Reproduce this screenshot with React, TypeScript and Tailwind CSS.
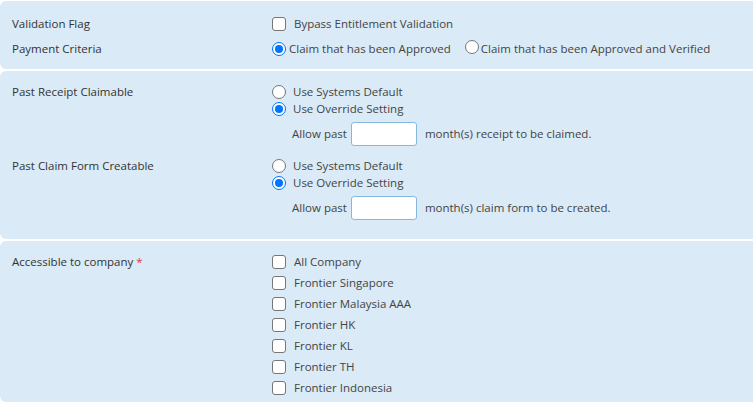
import React from 'react';

const Checkbox = () => (
  <span className="inline-block w-[14px] h-[14px] shrink-0 rounded-[3px] border border-[#767676] bg-white" />
);

const Radio = ({ checked }: { checked?: boolean }) =>
  checked ? (
    <span className="flex w-[14px] h-[14px] shrink-0 items-center justify-center rounded-full border border-[#0075ff] bg-white">
      <span className="w-[8px] h-[8px] rounded-full bg-[#0075ff]" />
    </span>
  ) : (
    <span className="inline-block w-[14px] h-[14px] shrink-0 rounded-full border border-[#767676] bg-white" />
  );

const OverrideBlock = ({ label, suffix }: { label: string; suffix: string }) => (
  <div className="grid grid-cols-[260px_1fr]">
    <div className="h-[17px] leading-[17px] text-[#333]">{label}</div>
    <div className="flex flex-col">
      <div className="flex h-[17px] items-center gap-[7px]">
        <Radio />
        <span>Use Systems Default</span>
      </div>
      <div className="flex h-[17px] items-center gap-[7px]">
        <Radio checked />
        <span>Use Override Setting</span>
      </div>
      <div className="mt-[5px] flex h-[24px] items-center pl-[20px]">
        <span>Allow past</span>
        <input
          type="text"
          className="ml-[4px] h-[24px] w-[66px] rounded-[3px] border border-[#86b7dc] bg-white outline-none"
        />
        <span className="ml-[8px]">{suffix}</span>
      </div>
    </div>
  </div>
);

const companies = [
  'All Company',
  'Frontier Singapore',
  'Frontier Malaysia AAA',
  'Frontier HK',
  'Frontier KL',
  'Frontier TH',
  'Frontier Indonesia',
];

export default function App() {
  return (
    <div className="min-h-[402px] bg-white pt-px font-['Open_Sans',sans-serif] text-[11.5px] text-[#444]">
      {/* general */}
      <div className="rounded-l-[6px] bg-[#daeaf7] pl-3 pt-[13px] pb-[10px]">
        <div className="grid grid-cols-[260px_1fr] gap-y-[5px]">
          <div className="h-[20px] leading-[20px] text-[#333]">Validation Flag</div>
          <div className="flex h-[20px] items-center gap-[8px]">
            <Checkbox />
            <span>Bypass Entitlement Validation</span>
          </div>
          <div className="h-[20px] leading-[20px] text-[#333]">Payment Criteria</div>
          <div className="flex h-[20px] items-center">
            <Radio checked />
            <span className="ml-[3px]">Claim that has been Approved</span>
            <span className="ml-[14px]">
              <Radio />
            </span>
            <span className="ml-[2px]">Claim that has been Approved and Verified</span>
          </div>
        </div>
      </div>

      {/* past settings */}
      <div className="mt-[2px] flex flex-col gap-[11px] rounded-l-[6px] bg-[#daeaf7] pl-3 pt-[12px] pb-[19px]">
        <OverrideBlock label="Past Receipt Claimable" suffix="month(s) receipt to be claimed." />
        <OverrideBlock label="Past Claim Form Creatable" suffix="month(s) claim form to be created." />
      </div>

      {/* companies */}
      <div className="mt-[2px] grid grid-cols-[260px_1fr] rounded-l-[6px] bg-[#daeaf7] pl-3 pt-[10px] pb-[4px]">
        <div className="h-[21px] leading-[21px] text-[#333]">
          Accessible to company <span className="text-[#e03a3a]">*</span>
        </div>
        <div className="flex flex-col">
          {companies.map((c) => (
            <div key={c} className="flex h-[21px] items-center gap-[8px]">
              <Checkbox />
              <span>{c}</span>
            </div>
          ))}
        </div>
      </div>
    </div>
  );
}
